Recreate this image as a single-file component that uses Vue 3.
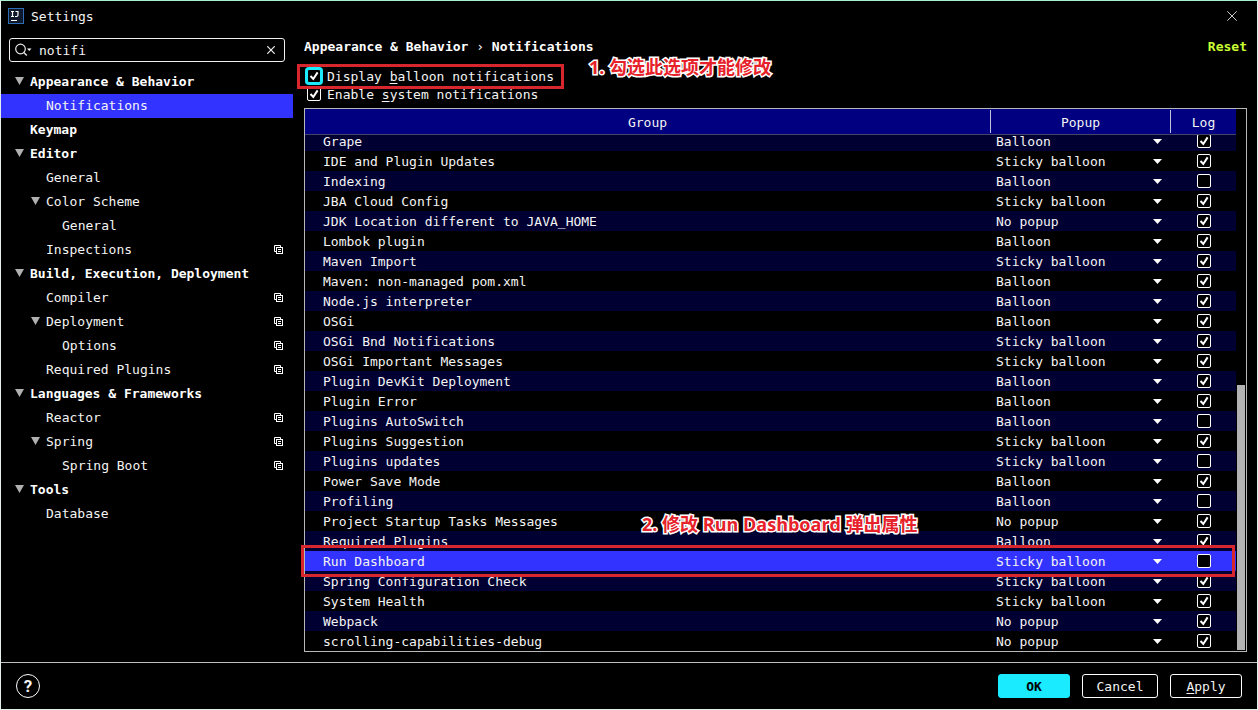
<script setup>
import { ref, onMounted } from 'vue'

const query = ref('notifi')
const displayBalloons = ref(true)
const enableSystem = ref(true)

const tree = [
  { label: 'Appearance & Behavior', level: 0, open: true, bold: true },
  { label: 'Notifications', level: 1, selected: true },
  { label: 'Keymap', level: 0, bold: true },
  { label: 'Editor', level: 0, open: true, bold: true },
  { label: 'General', level: 1 },
  { label: 'Color Scheme', level: 1, open: true },
  { label: 'General', level: 2 },
  { label: 'Inspections', level: 1, project: true },
  { label: 'Build, Execution, Deployment', level: 0, open: true, bold: true },
  { label: 'Compiler', level: 1, project: true },
  { label: 'Deployment', level: 1, open: true, project: true },
  { label: 'Options', level: 2, project: true },
  { label: 'Required Plugins', level: 1, project: true },
  { label: 'Languages & Frameworks', level: 0, open: true, bold: true },
  { label: 'Reactor', level: 1, project: true },
  { label: 'Spring', level: 1, open: true, project: true },
  { label: 'Spring Boot', level: 2, project: true },
  { label: 'Tools', level: 0, open: true, bold: true },
  { label: 'Database', level: 1 }
]

const popupKinds = ['Balloon', 'Sticky balloon', 'No popup']
const B = 'Balloon'
const S = 'Sticky balloon'
const N = 'No popup'
const groups = ref(
  [
    ['Grape', B, true],
    ['IDE and Plugin Updates', S, true],
    ['Indexing', B, false],
    ['JBA Cloud Config', S, true],
    ['JDK Location different to JAVA_HOME', N, true],
    ['Lombok plugin', B, true],
    ['Maven Import', S, true],
    ['Maven: non-managed pom.xml', B, true],
    ['Node.js interpreter', B, true],
    ['OSGi', B, true],
    ['OSGi Bnd Notifications', S, true],
    ['OSGi Important Messages', S, true],
    ['Plugin DevKit Deployment', B, true],
    ['Plugin Error', B, true],
    ['Plugins AutoSwitch', B, false],
    ['Plugins Suggestion', S, true],
    ['Plugins updates', S, false],
    ['Power Save Mode', B, true],
    ['Profiling', B, false],
    ['Project Startup Tasks Messages', N, true],
    ['Required Plugins', B, true],
    ['Run Dashboard', S, false],
    ['Spring Configuration Check', S, true],
    ['System Health', S, true],
    ['Webpack', N, true],
    ['scrolling-capabilities-debug', N, true]
  ].map(([name, popup, log]) => ({ name, popup, log }))
)
const selected = ref('Run Dashboard')

const viewport = ref(null)
onMounted(() => {
  viewport.value.scrollTop = viewport.value.scrollHeight
})
</script>

<template>
  <div class="window">
    <header class="titlebar">
      <svg class="logo" width="16" height="16" viewBox="0 0 16 16" aria-hidden="true">
        <rect x="0.5" y="0.5" width="15" height="15" fill="#10182c" stroke="#2f6db5" />
        <path d="M3 3.500h3M4.500 3.500v5M3 8.500h3M7.500 3.500h3M10 3.500v3.500q0 1.500-1.500 1.500h-1.500" fill="none" stroke="#fff" stroke-width="1.200" />
        <path d="M3 12.500h6" stroke="#fff" />
      </svg>
      <h1>Settings</h1>
      <button class="close" type="button" aria-label="Close">
        <svg width="10" height="10" viewBox="0 0 10 10"><path d="M0.300 0.300l9.400 9.400M9.700 0.300l-9.400 9.400" stroke="#c8c8c8" /></svg>
      </button>
    </header>

    <div class="body">
      <aside class="sidebar">
        <div class="search">
          <svg width="18" height="14" viewBox="0 0 18 14" aria-hidden="true">
            <circle cx="5.500" cy="6" r="4.800" fill="none" stroke="#e8e8e8" stroke-width="1.200" />
            <path d="M8.800 9.500l3 3" stroke="#e8e8e8" stroke-width="1.400" />
            <path d="M12 5.500h4.500l-2.250 2.500z" fill="#fff" />
          </svg>
          <input v-model="query" type="text" aria-label="Search settings" />
          <button type="button" aria-label="Clear search" @click="query = ''">
            <svg width="8" height="8" viewBox="0 0 8 8"><path d="M0.300 0.300l7.400 7.400M7.700 0.300l-7.400 7.400" stroke="#f0f0f0" stroke-width="1.200" /></svg>
          </button>
        </div>
        <nav class="tree" aria-label="Settings pages">
          <a
            v-for="(item, i) in tree"
            :key="i"
            href="#"
            class="node"
            :class="['level-' + item.level, { bold: item.bold, selected: item.selected }]"
            @click.prevent
          >
            <span class="arrow">
              <svg v-if="item.open" width="9" height="8" viewBox="0 0 9 8"><path d="M0 0h9L4.500 8z" fill="#b0b0b0" /></svg>
            </span>
            <span class="label">{{ item.label }}</span>
            <svg v-if="item.project" class="project" width="9" height="9" viewBox="0 0 9 9" fill="none" stroke="#fff">
              <path d="M2 6.500h-1.500v-6h6v1.500" />
              <rect x="2.500" y="2.500" width="6" height="6" />
              <path d="M4 4.500h3M4 6.500h3" />
            </svg>
          </a>
        </nav>
      </aside>

      <main class="content">
        <div class="heading">
          <h2>Appearance &amp; Behavior <span class="sep">›</span> Notifications</h2>
          <button class="reset" type="button">Reset</button>
        </div>

        <div class="options">
          <label class="option focused">
            <span class="check">
              <input v-model="displayBalloons" type="checkbox" />
              <svg v-if="displayBalloons" width="14" height="14" viewBox="0 0 14 14"><path d="M3.500 7l2.800 3L10.600 3.400" /></svg>
            </span>
            <span class="text">Display <u>b</u>alloon notifications</span>
          </label>
          <label class="option">
            <span class="check">
              <input v-model="enableSystem" type="checkbox" />
              <svg v-if="enableSystem" width="14" height="14" viewBox="0 0 14 14"><path d="M3.500 7l2.800 3L10.600 3.400" /></svg>
            </span>
            <span class="text">Enable <u>s</u>ystem notifications</span>
          </label>
          <div class="outline outline-option"></div>
          <p class="note note-option">1. 勾选此选项才能修改</p>
        </div>

        <div class="frame">
          <div ref="viewport" class="viewport">
            <table>
              <thead>
                <tr>
                  <th scope="col"><span>Group</span></th>
                  <th scope="col" class="col-popup"><span>Popup</span></th>
                  <th scope="col" class="col-log"><span>Log</span></th>
                </tr>
              </thead>
              <tbody>
                <tr v-for="g in groups" :key="g.name" :class="{ selected: g.name === selected }" @click="selected = g.name">
                  <td class="name">{{ g.name }}</td>
                  <td class="popup">
                    <div class="picker">
                      <select v-model="g.popup" :aria-label="'Popup for ' + g.name">
                        <option v-for="k in popupKinds" :key="k">{{ k }}</option>
                      </select>
                      <svg width="9" height="5" viewBox="0 0 9 5"><path d="M0 0h9L4.500 5z" fill="#fff" /></svg>
                    </div>
                  </td>
                  <td class="log">
                    <span class="check">
                      <input v-model="g.log" type="checkbox" :aria-label="'Log ' + g.name" />
                      <svg v-if="g.log" width="14" height="14" viewBox="0 0 14 14"><path d="M3.500 7l2.800 3L10.600 3.400" /></svg>
                    </span>
                  </td>
                </tr>
              </tbody>
            </table>
          </div>
          <div class="track"><div class="thumb"></div></div>
          <div class="outline outline-row"></div>
          <p class="note note-row">2. 修改 Run Dashboard 弹出属性</p>
        </div>
      </main>
    </div>

    <footer class="footer">
      <button class="help" type="button" aria-label="Help">?</button>
      <button class="action primary" type="button">OK</button>
      <button class="action cancel" type="button">Cancel</button>
      <button class="action" type="button"><span><u>A</u>pply</span></button>
    </footer>
  </div>
</template>

<style>
body {
  background: #000;
}
</style>

<style scoped>
* {
  box-sizing: border-box;
}
.window {
  display: flex;
  flex-direction: column;
  height: 100vh;
  border: 1px solid #e4f0ee;
  border-top-color: #a8f0d0;
  background: #000;
  color: #f4f4f4;
  font: 13px/20px "DejaVu Sans Mono", "Liberation Mono", monospace;
}
button,
input,
select {
  margin: 0;
  padding: 0;
  border: 0;
  background: none;
  color: inherit;
  font: inherit;
  outline: none;
}
h1,
h2,
p {
  margin: 0;
  font-size: 13px;
}
u {
  text-underline-offset: 2px;
}

.titlebar {
  display: flex;
  align-items: center;
  gap: 7px;
  height: 30px;
  padding: 0 20px 0 7px;
}
.titlebar h1 {
  flex: 1;
  padding-top: 2px;
  font-weight: normal;
}
.close {
  display: grid;
}

.body {
  display: flex;
  flex: 1;
  min-height: 0;
}

.sidebar {
  width: 292px;
  padding-top: 7px;
}
.search {
  display: flex;
  align-items: center;
  gap: 6px;
  height: 24px;
  margin: 0 8px;
  padding: 0 9px 0 5px;
  border: 1px solid #f0f0f0;
  border-radius: 3px;
}
.search input {
  flex: 1;
  min-width: 0;
  padding-top: 2px;
}
.search button {
  display: grid;
}
.tree {
  padding-top: 8px;
}
.node {
  display: flex;
  align-items: center;
  height: 24px;
  padding-right: 10px;
  color: inherit;
  text-decoration: none;
}
.node svg {
  margin-bottom: 2px;
}
.level-0 {
  padding-left: 14px;
}
.level-1 {
  padding-left: 30px;
}
.level-2 {
  padding-left: 46px;
}
.bold {
  font-weight: bold;
  color: #fff;
}
.node.selected {
  background: #3333ff;
}
.arrow {
  display: grid;
  width: 15px;
}
.label {
  flex: 1;
}

.content {
  display: flex;
  flex: 1;
  flex-direction: column;
  min-width: 0;
  padding: 6px 10px 10px 11px;
}
.heading {
  display: flex;
  justify-content: space-between;
}
.heading h2 {
  color: #fff;
}
.sep {
  font-weight: normal;
}
.reset {
  color: #ccff33;
  font-weight: bold;
}

.options {
  position: relative;
  padding: 10px 0 5px 3px;
}
.option {
  display: flex;
  align-items: center;
  gap: 6px;
  height: 18px;
}
.option .text {
  padding-top: 2px;
}
.check {
  display: inline-grid;
  width: 14px;
  height: 14px;
}
.check input {
  grid-area: 1 / 1;
  appearance: none;
  width: 14px;
  height: 14px;
  border: 1px solid #fff;
  border-radius: 2px;
  background: #000;
}
.check svg {
  grid-area: 1 / 1;
  fill: none;
  stroke: #fff;
  stroke-width: 2;
  pointer-events: none;
}
.focused input {
  border-color: #1aebff;
  box-shadow: 0 0 0 2px #1aebff;
}

.frame {
  position: relative;
  display: flex;
  flex: 1;
  min-height: 0;
  border: 1px solid #b8b8b8;
}
.viewport {
  flex: 1;
  min-width: 0;
  overflow-y: auto;
  scrollbar-width: none;
}
table {
  width: 100%;
  table-layout: fixed;
  border-spacing: 0;
}
th {
  position: sticky;
  top: 0;
  z-index: 1;
  height: 26px;
  padding: 1px 0;
  border-bottom: 1px solid #444466;
  background: #000080;
  font-weight: normal;
}
th span {
  display: block;
  padding-top: 2px;
  line-height: 21px;
}
th + th span {
  border-left: 1px solid #c0c0d8;
}
.col-popup {
  width: 180px;
}
.col-log {
  width: 66px;
}
td {
  height: 20px;
  padding: 0;
}
tbody tr:nth-child(odd) {
  background: #000033;
}
tbody tr.selected {
  background: #3333ff;
}
.name {
  padding: 2px 0 0 18px;
  line-height: 18px;
}
.picker {
  display: grid;
  grid-template-columns: 1fr auto;
  align-items: center;
  padding: 0 8px 0 6px;
}
.picker select {
  grid-area: 1 / 1 / 2 / 3;
  appearance: none;
  width: 100%;
  height: 20px;
  padding-top: 1px;
}
.picker option {
  background: #000;
}
.picker svg {
  grid-area: 1 / 2;
  pointer-events: none;
}
.log {
  padding-left: 2px;
  text-align: center;
  line-height: 0;
}
.track {
  display: flex;
  flex-direction: column;
  justify-content: flex-end;
  width: 10px;
  padding: 1px;
}
.thumb {
  height: 49%;
  background: #b3b3b3;
}

.outline {
  position: absolute;
  border: 3px solid #d8262e;
  pointer-events: none;
}
.outline-option {
  top: 7px;
  left: -7px;
  width: 267px;
  height: 25px;
}
.outline-row {
  right: 11px;
  bottom: 74px;
  left: -4px;
  height: 32px;
}
.note {
  position: absolute;
  color: #e6212a;
  font: bold 18px/24px "Open Sans", "Noto Sans CJK SC", sans-serif;
  white-space: nowrap;
  -webkit-text-stroke: 3px #fff;
  paint-order: stroke fill;
}
.note-option {
  top: -2px;
  left: 285px;
}
.note-row {
  bottom: 115px;
  left: 337px;
}

.footer {
  display: flex;
  align-items: center;
  height: 47px;
  padding: 0 15px;
  border-top: 1px solid #c0c0c0;
}
.help {
  width: 24px;
  height: 24px;
  margin-right: auto;
  border: 1px solid #fff;
  border-radius: 50%;
  font: bold 17px/20px Roboto, sans-serif;
}
.action {
  width: 72px;
  height: 24px;
  margin-left: 12px;
  padding-top: 2px;
  border: 1px solid #fff;
  border-radius: 3px;
}
.cancel {
  width: 76px;
}
.primary {
  border-color: #1aebff;
  background: #1aebff;
  color: #000;
  font-weight: bold;
}
</style>
